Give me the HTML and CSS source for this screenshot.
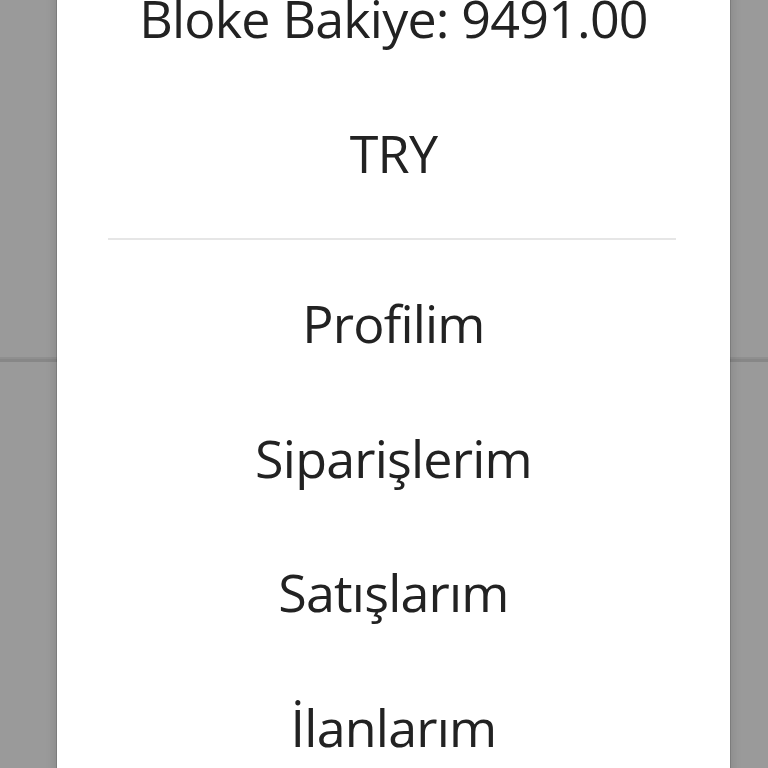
FILE: index.html
```html
<!DOCTYPE html>
<html lang="tr">
<head>
<meta charset="utf-8">
<link rel="stylesheet" href="styles.css">
<title>Menu</title>
</head>
<body>
<div class="backdrop">
  <div class="header"></div>
  <div class="content"></div>
</div>
<div class="dropdown">
  <div class="item">Bloke Bakiye: 9491.00</div>
  <div class="item">TRY</div>
  <div class="divider"></div>
  <a class="item">Profilim</a>
  <a class="item">Siparişlerim</a>
  <a class="item">Satışlarım</a>
  <a class="item">İlanlarım</a>
</div>
</body>
</html>
```
FILE: styles.css
```css
html, body {
  margin: 0;
  padding: 0;
  width: 768px;
  height: 768px;
  overflow: hidden;
  background: #9a9a9a;
  font-family: "Open Sans", "Noto Sans", sans-serif;
}
.backdrop {
  display: flex;
  flex-direction: column;
  height: 768px;
}
.header {
  height: 359px;
  border-bottom: 3px solid #878787;
  box-shadow: 0 -5px 0 -3px #8f8f8f inset;
}
.content {
  flex: 1;
}
.dropdown {
  position: absolute;
  left: 57px;
  top: -49px;
  width: 673px;
  height: 900px;
  background: #fff;
  box-shadow: 0 0 0 1px rgba(0,0,0,0.12), 0 0 9px 2px rgba(0,0,0,0.12);
  display: flex;
  flex-direction: column;
}
.item {
  display: block;
  height: 134.5px;
  line-height: 134.5px;
  text-align: center;
  font-size: 52px;
  letter-spacing: -0.8px;
  color: #222;
  white-space: nowrap;
}
.divider {
  height: 2px;
  background: #e6e6e6;
  margin: 18px 54px 16px 51px;
}
```
